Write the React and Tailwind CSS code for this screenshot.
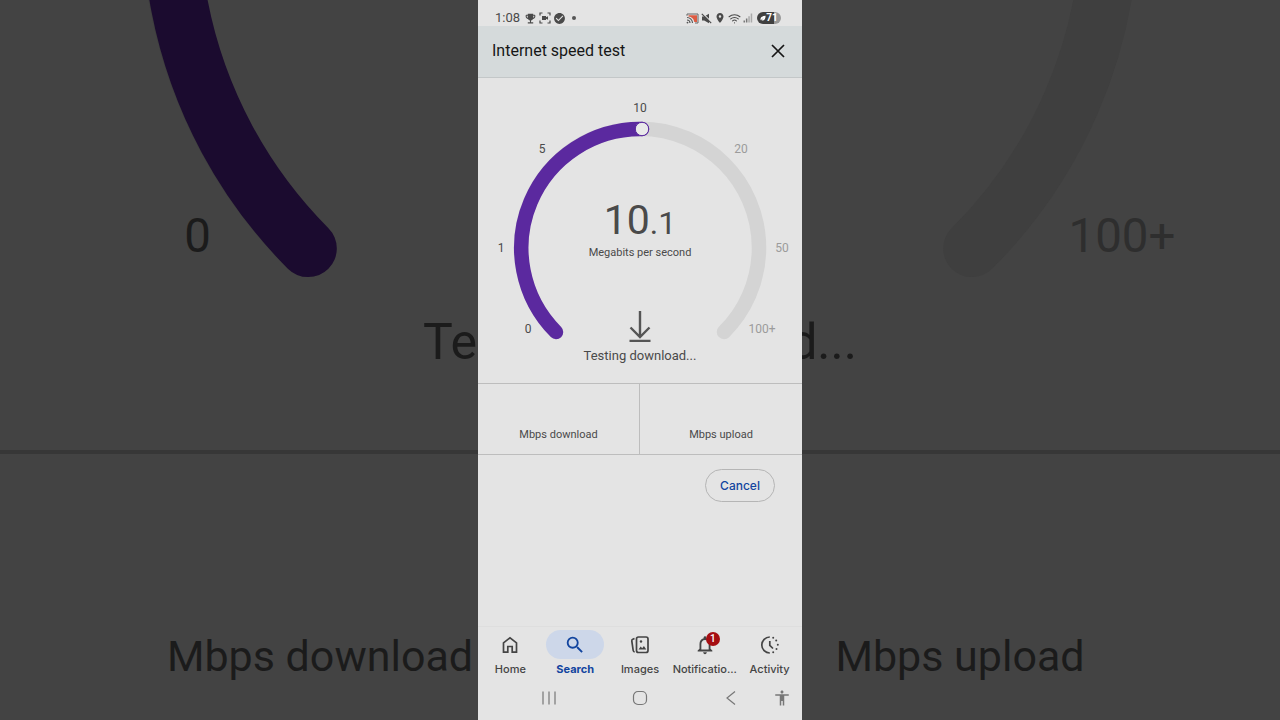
import React from 'react';
import { Wifi } from 'lucide-react';
import { MdSearch, MdNotificationsNone, MdEmojiEvents, MdLocationOn, MdCheckCircle, MdAccessibility } from 'react-icons/md';

// Scale marks around the dial, in the dial's own 324 x 305 units
const MARKS = [
    { label: '0', x: 50, y: 255, reached: true },
    { label: '1', x: 23, y: 174, reached: true },
    { label: '5', x: 64, y: 75, reached: true },
    { label: '10', x: 162, y: 34, reached: true },
    { label: '20', x: 263, y: 75, reached: false },
    { label: '50', x: 304, y: 174, reached: false },
    { label: '100+', x: 284, y: 255, reached: false },
];

const END_MARKS = MARKS.filter((mark) => mark.label === '0' || mark.label === '100+');

const THEMES = {
    light: { track: 'stroke-[#d4d4d4]', fill: 'stroke-[#5b299f]', knob: 'fill-[#e9e9e9] stroke-[#5b299f]', on: 'fill-[#4a4a4a]', off: 'fill-[#9b9b9b]' },
    dark: { track: 'stroke-[#3f3f3f]', fill: 'stroke-[#1b0b2f]', knob: 'fill-[#454545] stroke-[#1b0b2f]', on: 'fill-[#1b1b1b]', off: 'fill-[#2e2e2e]' },
};

const Dial = ({ theme, marks = MARKS }) => {
    const colors = THEMES[theme];
    return (
        <svg viewBox="0 0 324 305" className="block w-full [grid-area:1/1]" fill="none">
            <path d="M246 254A119 119 0 1 0 78 254" strokeWidth="14.5" strokeLinecap="round" className={colors.track} />
            <path d="M78 254A119 119 0 0 1 164 51" strokeWidth="14.5" strokeLinecap="round" className={colors.fill} />
            <circle cx="164" cy="51" r="6.7" strokeWidth="1" className={colors.knob} />
            {marks.map((mark) => (
                <text key={mark.label} x={mark.x} y={mark.y} textAnchor="middle" fontSize="12" className={mark.reached ? colors.on : colors.off}>
                    {mark.label}
                </text>
            ))}
        </svg>
    );
};

const DownloadIcon = () => (
    <svg viewBox="0 0 24 32" className="h-8 w-6" fill="none" stroke="#555" strokeWidth="2.4">
        <path d="M12 1v26M2.500 17.500 12 27l9.500-9.500M1.500 31h21" />
    </svg>
);

const HomeIcon = () => (
    <svg viewBox="0 0 20 20" className="size-5" fill="none" stroke="currentColor" strokeWidth="1.700">
        <path d="M3.500 17.200V7.800L10 2.800l6.500 5v9.400h-4.300v-5.700H7.800v5.700z" />
    </svg>
);

const ImagesIcon = () => (
    <svg viewBox="0 0 20 20" className="size-5" fill="none" stroke="currentColor" strokeWidth="1.700" strokeLinejoin="round">
        <rect x="6.500" y="2" width="11.500" height="15.500" rx="2" />
        <path d="M4.500 3.500 2.800 4.200Q1.600 4.700 1.800 6l1.400 9.500q.2 1.300 1.500 1.500" />
        <path d="M8.500 14.500l2.200-3 1.500 1.700 1.700-2.200 2.400 3.500z" fill="currentColor" strokeWidth="0" />
        <circle cx="11" cy="6.500" r="1.200" fill="currentColor" stroke="none" />
    </svg>
);

const ActivityIcon = () => (
    <svg viewBox="0 0 20 20" className="size-5" fill="none" stroke="currentColor" strokeWidth="1.700">
        <path d="M9.800 2a8 8 0 0 0 0 16M9.800 6v4.300l3.200 3.200" />
        <g fill="currentColor" stroke="none">
            <circle cx="13.200" cy="2.800" r="1" />
            <circle cx="16.200" cy="5.400" r="1" />
            <circle cx="17.800" cy="9.700" r="1" />
            <circle cx="16.500" cy="14" r="1" />
            <circle cx="13.200" cy="17.200" r="1" />
        </g>
    </svg>
);

const CaptureIcon = () => (
    <svg viewBox="0 0 12 12" className="size-3" fill="none" stroke="currentColor" strokeWidth="1.200">
        <path d="M1 3.500V1h2.500M8.500 1H11v2.500M11 8.500V11H8.500M3.500 11H1V8.500" />
        <path d="M3 4h4v1.300L9 4.200v3.600L7 6.700V8H3z" fill="currentColor" stroke="none" />
    </svg>
);

const CastIcon = () => (
    <svg viewBox="0 0 13 11" className="h-[11px] w-[13px]" fill="none">
        <path d="M2.500 2.200H11V9H8.300Q7.500 4.200 2.500 3.500z" fill="#dd5b42" />
        <path d="M1 2.800V1h11v9H9" stroke="#666" strokeWidth="1" />
        <path d="M1 4.500A5.500 5.500 0 0 1 6.500 10M1 7a3 3 0 0 1 3 3" stroke="#555" strokeWidth="1.100" />
        <circle cx="1.500" cy="9.600" r=".9" fill="#555" />
    </svg>
);

const MuteIcon = () => (
    <svg viewBox="0 0 11 11" className="size-[11px]" fill="currentColor">
        <path d="M1 3.500h2.200L8 .8v9.400L3.200 7.500H1z" />
        <path d="M1.800.4l9 9" stroke="#e4e4e4" strokeWidth="1.200" />
        <path d="M.8.8l9.400 9.400" stroke="currentColor" strokeWidth="1.200" />
    </svg>
);

const SignalIcon = () => (
    <svg viewBox="0 0 10 10" className="size-[10px]" fill="#777">
        <path d="M.5 7.500h1.500V9.500H.5zM2.900 5.500h1.500v4H2.900z" />
        <path d="M5.300 3.200h1.500v6.300H5.300zM7.700.5h1.500v9H7.700z" fill="#aaa" />
    </svg>
);

const StatusBar = () => (
    <div className="flex h-[26px] items-center justify-between pt-[10px] pr-[21px] pl-[17px] text-[#4a4a4a]">
        <div className="flex items-center gap-[2px]">
            <span className="w-[27px] text-[13px] leading-4">1:08</span>
            <MdEmojiEvents className="size-[13px]" />
            <CaptureIcon />
            <MdCheckCircle className="size-[13px]" />
            <span className="ml-1 size-1 rounded-full bg-[#555]" />
        </div>
        <div className="flex items-center gap-[2px]">
            <CastIcon />
            <MuteIcon />
            <MdLocationOn className="size-[12px]" />
            <Wifi className="size-[13px]" />
            <SignalIcon />
            <div className="ml-[2px] flex h-3 w-6 items-center justify-center rounded-full bg-linear-to-r from-[#404040] from-70% to-[#999] to-70% text-white">
                <svg viewBox="0 0 8 8" className="size-[6px]">
                    <path d="M1 7C-.5 3 3 1 7.500 1 7.500 5.500 5 8.500 2 7L5 3.500z" fill="currentColor" />
                </svg>
                <span className="text-[10px] leading-3 font-bold">71</span>
            </div>
        </div>
    </div>
);

const TABS = [
    { label: 'Home', icon: <HomeIcon /> },
    { label: 'Search', icon: <MdSearch className="size-[22px]" />, active: true },
    { label: 'Images', icon: <ImagesIcon /> },
    { label: 'Notifications', text: 'Notificatio...', icon: <MdNotificationsNone className="size-[22px]" />, badge: 1 },
    { label: 'Activity', icon: <ActivityIcon /> },
];

const TabBar = () => (
    <nav className="grid grid-cols-5 border-t border-[#dedede] pt-[3px]">
        {TABS.map((tab) => (
            <button key={tab.label} type="button" aria-label={tab.label} className={`flex flex-col items-center gap-1 ${tab.active ? 'font-bold text-[#12459f]' : 'font-medium text-[#444]'}`}>
                <span className={`relative flex h-[29px] w-[58px] items-center justify-center rounded-full ${tab.active ? 'bg-[#cdd7e9]' : ''}`}>
                    {tab.icon}
                    {tab.badge && (
                        <span className="absolute top-[2px] right-[14px] size-[14px] rounded-full bg-[#a50e12] text-center text-[10px] leading-[14px] font-medium text-white">{tab.badge}</span>
                    )}
                </span>
                <span className="font-['Inter',sans-serif] text-[11px] leading-3">{tab.text || tab.label}</span>
            </button>
        ))}
    </nav>
);

const SystemBar = () => (
    <div className="flex h-[45px] items-center text-[#777]">
        <div className="flex-1" />
        <button type="button" aria-label="Recent apps" className="flex w-[91px] justify-center">
            <svg viewBox="0 0 16 16" className="size-4" stroke="currentColor" strokeWidth="1.200">
                <path d="M2 1.500v13M8 1.500v13M14 1.500v13" />
            </svg>
        </button>
        <button type="button" aria-label="Home screen" className="flex w-[91px] justify-center">
            <svg viewBox="0 0 16 16" className="size-4" fill="none" stroke="currentColor" strokeWidth="1.200">
                <rect x="1.500" y="1.500" width="13" height="13" rx="4.500" />
            </svg>
        </button>
        <button type="button" aria-label="Back" className="flex w-[91px] justify-center">
            <svg viewBox="0 0 16 16" className="size-4" fill="none" stroke="currentColor" strokeWidth="1.200">
                <path d="M12 1.500 4 8l8 6.500" />
            </svg>
        </button>
        <div className="flex flex-1">
            <button type="button" aria-label="Accessibility" className="-ml-1">
                <MdAccessibility className="size-[18px]" />
            </button>
        </div>
    </div>
);

// Enlarged, dimmed copy of the test that fills the space beside the phone
const Backdrop = () => (
    <div aria-hidden="true" className="absolute inset-0 flex flex-col justify-end overflow-hidden bg-[#434343] text-[#1b1b1b]">
        <div className="grid shrink-0">
            <Dial theme="dark" marks={END_MARKS} />
            <p className="self-end pb-20 text-center text-[50px] leading-[56px] [grid-area:1/1]">Testing download...</p>
        </div>
        <div className="grid h-[270px] shrink-0 grid-cols-2 items-end border-t-4 border-[#373737] pb-9 text-center text-[43px] leading-[56px]">
            <span>Mbps download</span>
            <span>Mbps upload</span>
        </div>
    </div>
);

const App = () => {
    return (
        <div className="relative flex min-h-screen justify-center overflow-hidden font-['Roboto',sans-serif]">
            <Backdrop />
            <main className="relative flex w-full max-w-[324px] flex-col bg-[#e4e4e4]">
                <StatusBar />
                <header className="flex h-[52px] items-center justify-between border-b border-[#c3c7c8] bg-[#d5dadb] pr-4 pb-[1px] pl-[14px] text-[#161616]">
                    <h1 className="text-base">Internet speed test</h1>
                    <button type="button" aria-label="Close">
                        <svg viewBox="0 0 16 16" className="size-4" stroke="currentColor" strokeWidth="1.700">
                            <path d="M2 2l12 12M14 2 2 14" />
                        </svg>
                    </button>
                </header>

                <section className="grid">
                    <Dial theme="light" />
                    <div className="flex flex-col items-center self-end pb-[19px] text-[#4a4a4a] [grid-area:1/1]">
                        <p className="text-[41px] leading-[44px]">
                            10<span className="text-[32px]">.1</span>
                        </p>
                        <p className="text-[11px] leading-4">Megabits per second</p>
                        <div className="h-[49px]" />
                        <DownloadIcon />
                        <p className="mt-[6px] text-[13px] leading-4">Testing download...</p>
                    </div>
                </section>

                <section className="grid h-[72px] grid-cols-2 divide-x divide-[#bdbdbd] border-y border-[#bdbdbd] text-center text-[11px] leading-4 text-[#4a4a4a]">
                    <div className="flex items-end justify-center pb-[11px]">Mbps download</div>
                    <div className="flex items-end justify-center pb-[11px]">Mbps upload</div>
                </section>

                <div className="flex flex-1 items-start justify-end px-[27px] pt-[14px]">
                    <button type="button" className="h-[33px] w-[70px] rounded-full border border-[#b5b5b5] font-['Inter',sans-serif] text-[12px] font-medium text-[#12459f]">
                        Cancel
                    </button>
                </div>

                <TabBar />
                <SystemBar />
            </main>
        </div>
    );
};

export default App;
